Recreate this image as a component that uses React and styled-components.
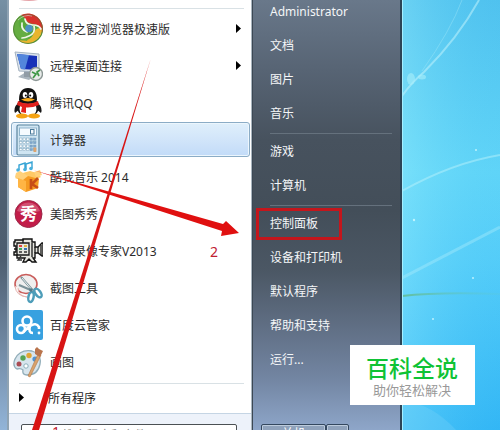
import React, { useState } from "react"
import styled, { createGlobalStyle } from "styled-components"

const GlobalStyle = createGlobalStyle`
  *, *::before, *::after {
    box-sizing: border-box;
  }
  body {
    margin: 0;
    font-family: "Noto Sans", "Noto Sans CJK SC", sans-serif;
    font-size: 12px;
  }
  button, input {
    font: inherit;
  }
`

const Desktop = styled.main`
  position: relative;
  display: flex;
  height: 100vh;
  overflow: hidden;
  background: #5dd0f6;
`

const StartMenu = styled.nav`
  box-sizing: content-box;
  width: 80%;
  display: flex;
  border-right: 2px solid #2c4456;
  background: linear-gradient(#7690a4 0%, #60788c 15%, #4f6072 35%, #4d5e70 60%, #7088a2 80%, #92b4d8 100%);
`

const Programs = styled.section`
  flex: 1;
  min-width: 0;
  display: flex;
  flex-direction: column;
  margin-left: 7px;
  border-left: 2px solid #8fa3b3;
  border-right: 1px solid #a9b5bf;
  background: #fff;
`

const ClippedIcon = styled.svg`
  display: block;
  flex: none;
  width: 20px;
  height: 2px;
  margin: 0 0 6px 10px;
`

const Divider = styled.hr`
  flex: none;
  width: auto;
  height: 1px;
  margin: ${(p) => p.$margin || "0"};
  border: 0;
  background: ${(p) => p.$color || "#d9e1e5"};
`

const ProgramList = styled.ul`
  margin: 0;
  padding: 1px 1px 0 2px;
  list-style: none;
`

const ProgramItem = styled.li`
  height: 37px;
  padding: 1px 0;
`

const ProgramButton = styled.button`
  display: flex;
  align-items: center;
  gap: 7px;
  width: 100%;
  height: 35px;
  padding: 0 8px 0 1px;
  border: 1px solid ${(p) => (p.$active ? "#8bacc6" : "transparent")};
  border-radius: 3px;
  background: ${(p) => (p.$active ? "linear-gradient(#dfeffb, #d3e6fa 45%, #c2dbf8)" : "none")};
  box-shadow: ${(p) => (p.$active ? "inset 0 0 0 1px #ecf6fd" : "none")};
  color: #2b2b2b;
  text-align: left;
  white-space: nowrap;
`

const ProgramIcon = styled.svg`
  flex: none;
  width: 30px;
  height: 32px;
`

const ProgramName = styled.span`
  flex: 1;
`

const Arrow = styled.svg`
  flex: none;
  width: 5px;
  height: 9px;
  fill: #000;
`

const AllPrograms = styled.button`
  display: flex;
  align-items: center;
  gap: 24px;
  flex: none;
  height: 29px;
  padding: 0 10px 2px;
  border: 0;
  background: #fff;
  color: #222;
`

const SearchBar = styled.form`
  flex: 1;
  padding: 10px 14px 0 12px;
  border-top: 1px solid #c5d5e4;
  background: #edf2fa;
`

const SearchInput = styled.input`
  display: block;
  width: 100%;
  height: 20px;
  padding: 0 8px 0 38px;
  border: 1px solid #4b5054;
  border-radius: 2px;
  background: #fff;

  &::placeholder {
    color: #858585;
    font-style: italic;
  }
`

const Sidebar = styled.section`
  flex: none;
  width: 148px;
  display: flex;
  flex-direction: column;
  padding: 0 8px 0 3px;
  border-left: 1px solid #3c4854;
  background: linear-gradient(#69788a 0, #576474 70px, #47525e 140px, #434e59 210px, #4b5764 270px, #617086 330px, #7386a3 380px, #8ea6c9 430px);
`

const PlaceList = styled.ul`
  margin: 0;
  padding: 0;
  list-style: none;

  &:first-child {
    margin-top: -5px;
  }
`

const PlaceLink = styled.a`
  display: block;
  width: fit-content;
  height: 34px;
  padding: 1px 0;
  color: #f4f6f8;
  text-decoration: none;
  white-space: nowrap;

  span {
    display: block;
    height: 32px;
    padding: 0 21px 0 11px;
    line-height: 26px;
    border: 3px solid ${(p) => (p.$marked ? "#c4161c" : "transparent")};
  }
`

const PowerGroup = styled.div`
  display: flex;
  flex: none;
  width: 88px;
  margin: 47px 0 0 5px;
`

const PowerButton = styled.button`
  flex: ${(p) => (p.$wide ? "3" : "1")};
  height: 20px;
  padding: 0;
  border: 1px solid #34485f;
  border-radius: 2px;
  background: #8fa2bb;
  box-shadow: inset 0 0 0 1px #bccbdc;
  color: #fff;
  line-height: 18px;
`

const Wallpaper = styled.svg`
  flex: 1;
  min-width: 0;
  height: 100%;
`

const Annotations = styled.svg`
  position: absolute;
  top: 0;
  left: 0;
  width: 500px;
  height: 430px;
  pointer-events: none;
  font-size: 14px;
`

const SiteBadge = styled.aside`
  position: absolute;
  right: 25px;
  bottom: 25px;
  padding: 9px 17px 6px 16px;
  background: #fff;
  text-align: center;
  font-family: "Noto Sans CJK SC", sans-serif;
`

const BadgeTitle = styled.strong`
  display: block;
  color: #0fc335;
  font-size: 23px;
  font-weight: 500;
  line-height: 27px;
`

const BadgeText = styled.span`
  display: block;
  color: #999;
  font-size: 13px;
  line-height: 18px;
`

const BrowserIcon = () => (
  <>
    <circle cx="15" cy="16" r="15" fill="#58a83c" />
    <path d="M8 2A15 15 0 0 1 29 20Q27 11 20 11Q13 10 12 5Z" fill="#d8322c" />
    <path d="M29 18A15 15 0 0 1 5 27Q17 29 20 22Q22 14 28 15Z" fill="#e9b52f" />
    <path d="M6 26A15 15 0 0 1 8 2Q2 14 11 17Q18 21 14 28Z" fill="#65ad42" />
    <path d="M12 6Q13 12 20 12Q26 12 28 16M21 13Q23 20 16 23Q12 25 9 25M9 10Q8 17 14 19" fill="none" stroke="#f1f6e8" strokeWidth="1.700" strokeLinecap="round" />
    <circle cx="16" cy="15.500" r="3.800" fill="#4c91c4" />
    <path d="M5 7Q11 1 19 3" fill="none" stroke="#fff" strokeOpacity=".5" />
    <circle cx="15" cy="16" r="14.500" fill="none" stroke="#536b38" strokeOpacity=".5" />
  </>
)

const RemoteIcon = () => (
  <>
    <path d="M5 27l8-5 8 4-5 4Z" fill="#a9b4bd" />
    <path d="M11 19h6v8h-6Z" fill="#919ca6" />
    <path d="M2 2L26 4 26 22 6 21Z" fill="#dce4ec" stroke="#a4b2c0" />
    <path d="M4 4l20 2v14L8 19Z" fill="#1731b8" />
    <path d="M4 4l12 1-4 14.500-4-.5Z" fill="#5386dc" />
    <circle cx="23" cy="24" r="6.500" fill="#e7ebe9" stroke="#8d9896" strokeWidth="1.400" />
    <path d="M19 22l4 2-3 4M27 20l-3 2 2 4" fill="none" stroke="#3e9847" strokeWidth="1.700" />
  </>
)

const QQIcon = () => (
  <>
    <path d="M5 16Q0 21 2 26L7 22M25 16Q30 21 28 26L23 22" fill="#161616" />
    <ellipse cx="15" cy="20" rx="11" ry="10" fill="#171717" />
    <ellipse cx="15" cy="22" rx="8.500" ry="8" fill="#fff" />
    <ellipse cx="9" cy="29" rx="6" ry="2.600" fill="#f5a313" />
    <ellipse cx="21" cy="29" rx="6" ry="2.600" fill="#f5a313" />
    <path d="M6 13Q6 1 15 1T24 13Q22 17 15 17T6 13Z" fill="#111" />
    <ellipse cx="12" cy="8" rx="2.300" ry="3" fill="#fff" />
    <ellipse cx="18" cy="8" rx="2.300" ry="3" fill="#fff" />
    <circle cx="12.800" cy="8.500" r="1" />
    <circle cx="17.200" cy="8.500" r="1" />
    <path d="M8 12.500Q15 9.500 22 12.500Q15 16.500 8 12.500Z" fill="#f8a91b" />
    <path d="M5 14Q15 19 25 14L26 18Q19 21 13 20.500L13 26 8 25 9 20 4 18Z" fill="#e0201c" />
  </>
)

const CalculatorIcon = () => (
  <>
    <rect x="4" y="1" width="22" height="30" rx="1.500" fill="#cfe5f2" stroke="#5c859e" strokeWidth="1.200" />
    <rect x="6.500" y="4" width="17" height="7.500" fill="#f6fbff" stroke="#8fb4cb" />
    <rect x="17.500" y="5.500" width="3.500" height="4.500" fill="none" stroke="#477797" />
    {[14, 17.5, 21, 24.5].map((y) =>
      [6.5, 10, 13.5, 17, 20.5].map((x) => (
        <rect key={`${x}-${y}`} x={x} y={y} width="2.500" height="2.200" fill={x < 15 ? "#fff" : "#7da5cd"} stroke="#7ba2bb" strokeWidth=".5" />
      ))
    )}
    <rect x="20.500" y="23.500" width="2.800" height="4.500" fill="#dda36d" />
  </>
)

const KuwoIcon = () => (
  <>
    <path d="M6 9V4l6-2v5M13 8V3l6-2v6" fill="none" stroke="#36a4d5" strokeWidth="1.400" />
    <circle cx="5" cy="9" r="1.800" fill="#48afdc" />
    <circle cx="12" cy="8.500" r="1.800" fill="#48afdc" />
    <circle cx="18" cy="7.500" r="1.800" fill="#48afdc" />
    <path d="M6 13L2 17l8 3 5-4 6 3 7-3-4-4-7-2Z" fill="#ffc966" />
    <path d="M5 17l10-2 11 3-1 9-12 4-8-5Z" fill="#f59b22" />
    <path d="M5 17l8 3v11l-8-5Z" fill="#ffb544" />
    <path d="M18 18v10M25 17l-6 6 6 4" fill="none" stroke="#c84e16" strokeWidth="2.700" />
    <path d="M3 12l4-2 8 5-5 4-8-3ZM21 11l6-2 2 5-6 2Z" fill="#ffd17b" />
  </>
)

const MeituIcon = () => (
  <>
    <circle cx="15.500" cy="16" r="13.500" fill="#c21d49" stroke="#9b2848" />
    <path d="M4 13A12 12 0 0 1 27 13Q15 17 4 13Z" fill="#dd7891" opacity=".55" />
    <text x="15.500" y="22" textAnchor="middle" fontSize="17" fontWeight="700" fill="#fff">秀</text>
  </>
)

const RecorderIcon = () => (
  <>
    <path d="M2 7V5h8V4h9v3h3v5h3l4-4h1v13h-1l-4-3h-3v5h-2l3 4h-4l-3-3-3 3h-3l2-4H4v-3H1v-3h2V11H1V7Z" fill="#e6e6df" stroke="#111" strokeWidth="1.400" />
    <path d="M4 8h12v12H4ZM19 8v14M22 12v6M25 12v6M28 10v10M1 14h3M10 4v4" fill="none" stroke="#181818" strokeWidth="1.300" />
    <path d="M6 10h3v2H6Z" fill="#d44" />
    <path d="M11 10h3v2h-3Z" fill="#dfb43d" />
    <path d="M6 13h3v2H6Z" fill="#3fa75a" />
    <path d="M11 13h3v2h-3Z" fill="#3573b3" />
    <path d="M6 17h3M11 17h3M8 21l-3 4h4" fill="none" stroke="#333" strokeWidth="1.300" />
  </>
)

const SnippingIcon = () => (
  <>
    <ellipse cx="13" cy="12" rx="11" ry="9.500" fill="#f0efef" stroke="#c95d5b" strokeWidth="1.600" />
    <path d="M2 14Q3 24 14 25Q5 24 5 16" fill="#fff" stroke="#e5b5b1" />
    <path d="M8 5l14 16M6 13l14 6" stroke="#7c9299" strokeWidth="2.200" />
    <path d="M9 6l11 13" stroke="#e9eff0" />
    <ellipse cx="18" cy="25" rx="2.600" ry="5" transform="rotate(12 18 25)" fill="none" stroke="#4d9db9" strokeWidth="2.500" />
    <ellipse cx="25" cy="21" rx="2.600" ry="5" transform="rotate(-36 25 21)" fill="none" stroke="#4d9db9" strokeWidth="2.500" />
    <circle cx="18" cy="18" r="1.800" fill="#547c8a" />
  </>
)

const BaiduCloudIcon = () => (
  <>
    <rect x="0" y="1" width="30" height="30" rx="2" fill="#38a1e0" />
    <circle cx="14" cy="12" r="4.500" fill="none" stroke="#fff" strokeWidth="2.600" />
    <circle cx="8" cy="20" r="4" fill="none" stroke="#fff" strokeWidth="2.600" />
    <path d="M10 23L17 17Q23 13 26 18V20M17 17Q15 24 20 24" fill="none" stroke="#fff" strokeWidth="2.600" />
    <circle cx="26" cy="24" r="1.400" fill="#fff" />
  </>
)

const PaintIcon = () => (
  <>
    <path d="M2 13Q7 3 19 5Q29 8 27 18Q25 29 14 29Q9 29 10 24Q8 22 4 23Q-1 20 2 13Z" fill="#d7e5ed" stroke="#91adb9" strokeWidth="1.300" />
    <circle cx="6" cy="18" r="2.500" fill="#a94d54" />
    <circle cx="10" cy="12" r="2.700" fill="#54a455" />
    <circle cx="16" cy="9.500" r="2.700" fill="#e0a534" />
    <circle cx="22" cy="13" r="2.600" fill="#4f93d2" />
    <circle cx="13" cy="20" r="2.200" fill="#fff" stroke="#8aaeba" />
    <path d="M25 8L15 30l2 1L28 9Z" fill="#d8a36e" stroke="#b3733f" strokeWidth=".6" />
    <path d="M22 3l2-2 2 2 4 2-3 6-5-3Z" fill="#b9744d" />
  </>
)

const programs = [
  { name: "世界之窗浏览器极速版", icon: BrowserIcon, submenu: true },
  { name: "远程桌面连接", icon: RemoteIcon, submenu: true },
  { name: "腾讯QQ", icon: QQIcon },
  { name: "计算器", icon: CalculatorIcon },
  { name: "酷我音乐 2014", icon: KuwoIcon },
  { name: "美图秀秀", icon: MeituIcon },
  { name: "屏幕录像专家V2013", icon: RecorderIcon },
  { name: "截图工具", icon: SnippingIcon },
  { name: "百度云管家", icon: BaiduCloudIcon },
  { name: "画图", icon: PaintIcon }
]

const places = [
  ["Administrator", "文档", "图片", "音乐"],
  ["游戏", "计算机"],
  ["控制面板", "设备和打印机", "默认程序", "帮助和支持", "运行..."]
]

function RightArrow() {
  return (
    <Arrow viewBox="0 0 5 9" aria-hidden="true">
      <path d="M0 0L5 4.500 0 9Z" />
    </Arrow>
  )
}

function DesktopWallpaper() {
  return (
    <Wallpaper viewBox="0 0 98 430" preserveAspectRatio="none" aria-hidden="true">
      <defs>
        <linearGradient id="sky" x1="0" y1="0" x2="0" y2="1">
          <stop offset="0" stopColor="#55c4ee" />
          <stop offset=".4" stopColor="#66d8f8" />
          <stop offset=".6" stopColor="#5ad0f9" />
          <stop offset="1" stopColor="#35b7f5" />
        </linearGradient>
        <linearGradient id="glow">
          <stop offset="0" stopColor="#a3f4ff" stopOpacity=".28" />
          <stop offset="1" stopColor="#20b0f4" stopOpacity=".1" />
        </linearGradient>
        <linearGradient id="grass">
          <stop offset="0" stopColor="#62b985" />
          <stop offset="1" stopColor="#62c9cc" stopOpacity=".2" />
        </linearGradient>
      </defs>
      <path d="M0 0H98V430H0Z" fill="url(#sky)" />
      <path d="M0 0H98V430H0Z" fill="url(#glow)" />
      <path d="M0 96Q10 82 22 72Q56 38 77 0" fill="none" stroke="#bff2fb" strokeWidth="2" opacity=".55" />
      <path d="M20 71Q49 30 60 0" fill="none" stroke="#a5e9f8" opacity=".4" />
      <ellipse cx="9" cy="79" rx="4" ry="6" fill="#a9effa" opacity=".6" />
      <ellipse cx="20" cy="77" rx="4" ry="2.500" fill="#a9effa" opacity=".6" />
      <path d="M0 191Q50 163 98 155" fill="none" stroke="#b8f2fc" strokeWidth="2" opacity=".5" />
      <path d="M0 278Q50 252 98 227" fill="none" stroke="#b8f2fc" strokeWidth="3" opacity=".35" />
      <path d="M0 296Q35 292 98 294" fill="none" stroke="url(#grass)" strokeWidth="2" opacity=".8" />
      <path d="M0 400Q30 404 54 430H0Z" fill="#79d4f8" opacity=".3" />
      <g fill="#d6fbff" opacity=".8">
        <circle cx="12" cy="220" r="1.200" />
        <circle cx="71" cy="278" r="1" />
        <circle cx="31" cy="319" r="1" />
        <circle cx="74" cy="150" r="1" />
      </g>
      <path d="M0 0V430" stroke="#a4efff" strokeWidth="2" />
    </Wallpaper>
  )
}

function App() {
  const [active, setActive] = useState("计算器")

  return (
    <>
      <GlobalStyle />
      <Desktop>
        <StartMenu>
          <Programs>
            <ClippedIcon viewBox="0 0 20 2" aria-hidden="true">
              <path d="M1 0H19Q10 2 1 0Z" fill="#e5a3a8" />
            </ClippedIcon>
            <Divider $margin="0 7px 0 10px" />
            <ProgramList>
              {programs.map(({ name, icon: Icon, submenu }) => (
                <ProgramItem key={name}>
                  <ProgramButton type="button" $active={active === name} onClick={() => setActive(name)}>
                    <ProgramIcon viewBox="0 0 30 32" aria-hidden="true">
                      <Icon />
                    </ProgramIcon>
                    <ProgramName>{name}</ProgramName>
                    {submenu && <RightArrow />}
                  </ProgramButton>
                </ProgramItem>
              ))}
            </ProgramList>
            <Divider $margin="3px 7px 0 10px" />
            <AllPrograms type="button">
              <RightArrow />
              所有程序
            </AllPrograms>
            <SearchBar onSubmit={(e) => e.preventDefault()}>
              <SearchInput type="text" aria-label="搜索程序和文件" placeholder="搜索程序和文件" />
            </SearchBar>
          </Programs>

          <Sidebar>
            {places.map((group, i) => (
              <React.Fragment key={group[0]}>
                {i > 0 && <Divider $margin="2px 0 1px 14px" $color="#65717d" />}
                <PlaceList>
                  {group.map((place) => (
                    <li key={place}>
                      <PlaceLink href="#" $marked={place === "控制面板"}>
                        <span>{place}</span>
                      </PlaceLink>
                    </li>
                  ))}
                </PlaceList>
              </React.Fragment>
            ))}
            <PowerGroup>
              <PowerButton type="button" $wide>
                关机
              </PowerButton>
              <PowerButton type="button" aria-label="更多选项" />
            </PowerGroup>
          </Sidebar>
        </StartMenu>
        <DesktopWallpaper />

        <Annotations viewBox="0 0 500 430">
          <path d="M151 58L39 430H32Z" fill="#d81414" />
          <path d="M33 170L223 224 226 221 239 233 221 236 222 231Z" fill="#e01010" />
          <text x="210" y="257" fill="#bf2031">2</text>
          <text x="52" y="437" fill="#bf2031">1</text>
        </Annotations>

        <SiteBadge>
          <BadgeTitle>百科全说</BadgeTitle>
          <BadgeText>助你轻松解决</BadgeText>
        </SiteBadge>
      </Desktop>
    </>
  )
}

export default App
